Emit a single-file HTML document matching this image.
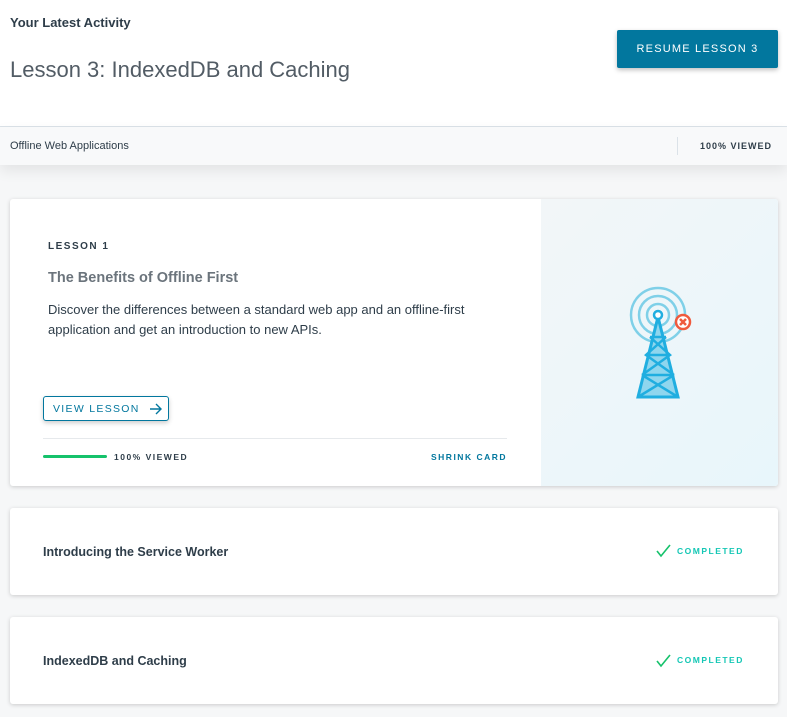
<!DOCTYPE html>
<html><head><style>
*{box-sizing:border-box;margin:0;padding:0}
body{width:787px;height:717px;overflow:hidden;font-family:"Liberation Sans",sans-serif;background:#f6f7f8;color:#2e3d49;position:relative}
.top{position:absolute;left:0;top:0;width:787px;height:127px;background:#fff;border-bottom:1px solid #dbe2e8}
.h1{position:absolute;left:10px;top:15px;font-size:13px;font-weight:bold;color:#2e3d49}
.h2{position:absolute;left:10px;top:57px;font-size:22px;color:#525c65}
.resume{position:absolute;left:617px;top:30px;width:161px;height:38px;background:#02779e;color:#fff;font-size:11px;letter-spacing:1.2px;display:flex;align-items:center;justify-content:center;border-radius:2px;box-shadow:0 2px 5px rgba(0,0,0,.25)}
.bar{position:absolute;left:0;top:127px;width:787px;height:38px;background:#f8f9fa;font-size:11px;color:#2e3d49;box-shadow:0 6px 14px rgba(0,0,0,.08)}
.bar .l{position:absolute;left:10px;top:13px}
.bar .sep{position:absolute;left:677px;top:10px;width:1px;height:18px;background:#dbe2e8}
.bar .r{position:absolute;right:15px;top:14px;font-size:9px;font-weight:bold;letter-spacing:1px}
.card{position:absolute;left:10px;background:#fff;border-radius:3px;box-shadow:0 1px 4px rgba(0,0,0,.18);width:768px}
.tiny{font-size:10px;letter-spacing:1.5px;font-weight:bold}
.row{font-size:12.5px;font-weight:bold;position:absolute;left:33px}
.comp{position:absolute;left:646px;font-size:8.5px;letter-spacing:1.5px;color:#15c7b5;font-weight:bold}
</style></head><body>
<div class="top">
<div class="h1">Your Latest Activity</div>
<div class="h2">Lesson 3: IndexedDB and Caching</div>
<div class="resume">RESUME LESSON 3</div>
</div>
<div class="bar"><div class="l">Offline Web Applications</div><div class="sep"></div><div class="r">100% VIEWED</div></div>

<div class="card" style="top:199px;height:287px;overflow:hidden">
<div style="position:absolute;left:531px;top:0;width:237px;height:287px;background:linear-gradient(135deg,#f2f6f8,#e8f6fb)"></div>
<div class="tiny" style="position:absolute;left:38px;top:42px;color:#2e3d49">LESSON 1</div>
<div style="position:absolute;left:38px;top:71px;font-size:14.5px;font-weight:bold;color:#6b747c">The Benefits of Offline First</div>
<div style="position:absolute;left:38px;top:101px;width:460px;font-size:13px;line-height:20px;color:#2e3d49">Discover the differences between a standard web app and an offline-first application and get an introduction to new APIs.</div>
<div style="position:absolute;left:33px;top:197px;width:126px;height:25px;border:1.5px solid #02779e;border-radius:3px;box-shadow:0 2px 5px rgba(0,0,0,.2);color:#02779e;font-size:10.5px;letter-spacing:1.3px;display:flex;align-items:center;padding-left:9px">VIEW LESSON <svg style="margin-left:9px" width="13" height="12" viewBox="0 0 13 12"><path d="M1 6H12M7 1L12 6L7 11" stroke="#02779e" stroke-width="1.4" fill="none"/></svg></div>
<div style="position:absolute;left:33px;top:239px;width:464px;height:1px;background:#e6e9ec"></div>
<div style="position:absolute;left:33px;top:256px;width:64px;height:3px;background:#15c26b;border-radius:2px"></div>
<div class="tiny" style="position:absolute;left:104px;top:253px;font-size:8.5px">100% VIEWED</div>
<div class="tiny" style="position:absolute;left:421px;top:253px;font-size:8.5px;color:#02779e">SHRINK CARD</div>
<svg style="position:absolute;left:610px;top:86px" width="90" height="115" viewBox="0 0 90 115">
<g fill="none" stroke="#7fd0e8" stroke-width="2.5"><circle cx="38" cy="30" r="27"/><circle cx="38" cy="30" r="19"/><circle cx="38" cy="30" r="11"/></g>
<path d="M38 32 L18 112 L58 112 Z" fill="#8fd6ee" stroke="#20aee0" stroke-width="3"/>
<path d="M30 52H46M26 70H50M22 90H54M30 52L50 70L22 90M46 52L26 70L54 90M22 90L58 112M54 90L18 112" stroke="#20aee0" stroke-width="2.5" fill="none"/>
<circle cx="38" cy="30" r="4" fill="#fff" stroke="#20aee0" stroke-width="2.5"/>
<circle cx="63" cy="37" r="7" fill="#fff" stroke="#ef5a3d" stroke-width="2.5"/>
<path d="M60 34L66 40M66 34L60 40" stroke="#ef5a3d" stroke-width="2.5"/>
</svg>
</div>

<div class="card" style="top:508px;height:87px">
<div class="row" style="top:37px">Introducing the Service Worker</div>
<svg style="position:absolute;left:646px;top:35px" width="15" height="15"><path d="M1 8L5 13L14 2" stroke="#15c26b" stroke-width="1.6" fill="none"/></svg>
<div class="comp" style="top:38px;left:667px">COMPLETED</div>
</div>
<div class="card" style="top:617px;height:87px">
<div class="row" style="top:37px">IndexedDB and Caching</div>
<svg style="position:absolute;left:646px;top:36px" width="15" height="15"><path d="M1 8L5 13L14 2" stroke="#15c26b" stroke-width="1.6" fill="none"/></svg>
<div class="comp" style="top:38px;left:667px">COMPLETED</div>
</div>
</body></html>
